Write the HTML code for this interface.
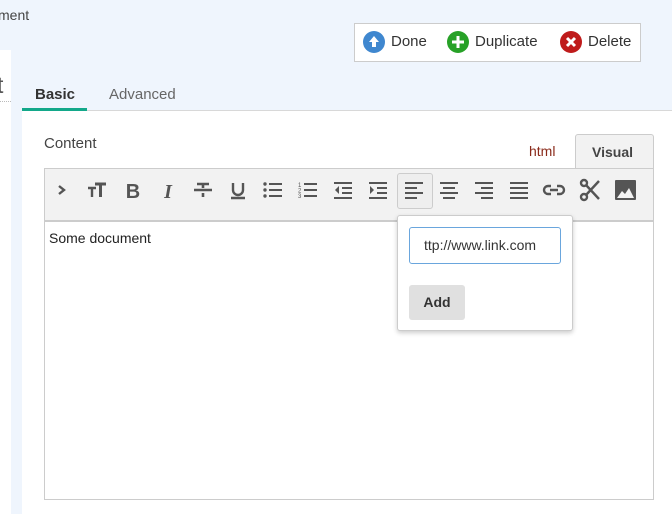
<!DOCTYPE html>
<html><head><style>
*{box-sizing:border-box;margin:0;padding:0}
body{width:672px;height:514px;overflow:hidden;background:#eff5fd;font-family:"Liberation Sans",sans-serif;position:relative;color:#333}
.a{position:absolute}
</style></head><body>
<div class="a" style="left:-2px;top:7px;font-size:14px;color:#444">ment</div>
<div class="a" style="left:0;top:50px;width:11px;height:464px;background:#fff"></div>
<div class="a" style="left:-3px;top:72px;font-size:23px;color:#555">t</div>
<div class="a" style="left:0;top:101px;width:11px;border-top:1px dotted #bbb"></div>

<div class="a" style="left:354px;top:23px;width:287px;height:39px;background:#fff;border:1px solid #ccc"></div>
<svg class="a" style="left:363px;top:31px" width="22" height="22"><circle cx="11" cy="11" r="11" fill="#3f87cf"/><path d="M11 5l5 6h-3v5h-4v-5h-3z" fill="#fff"/></svg>
<div class="a" style="left:391px;top:33px;font-size:15px">Done</div>
<svg class="a" style="left:447px;top:31px" width="22" height="22"><circle cx="11" cy="11" r="11" fill="#27a127"/><path d="M11 5v12M5 11h12" stroke="#fff" stroke-width="3"/></svg>
<div class="a" style="left:475px;top:33px;font-size:15px">Duplicate</div>
<svg class="a" style="left:560px;top:31px" width="22" height="22"><circle cx="11" cy="11" r="11" fill="#bf1b1b"/><path d="M7 7l8 8M15 7l-8 8" stroke="#fff" stroke-width="3"/></svg>
<div class="a" style="left:588px;top:33px;font-size:15px">Delete</div>

<div class="a" style="left:35px;top:86px;font-size:15px;font-weight:bold;color:#333">Basic</div>
<div class="a" style="left:109px;top:86px;font-size:15px;color:#666">Advanced</div>
<div class="a" style="left:22px;top:110px;width:650px;height:404px;background:#fff;border-top:1px solid #d8d8d8"></div>
<div class="a" style="left:22px;top:108px;width:65px;height:3px;background:#13a88a"></div>

<div class="a" style="left:44px;top:135px;font-size:15px;color:#444">Content</div>
<div class="a" style="left:529px;top:143px;font-size:14px;color:#8a2a1a">html</div>
<div class="a" style="left:575px;top:134px;width:79px;height:36px;background:#f2f2f2;border:1px solid #ccc;border-bottom:none;border-radius:3px 3px 0 0"></div>
<div class="a" style="left:592px;top:144px;font-size:14px;font-weight:bold;color:#444">Visual</div>

<div class="a" style="left:44px;top:168px;width:610px;height:332px;border:1px solid #ccc;background:#fff"></div>
<div class="a" style="left:45px;top:169px;width:608px;height:53px;background:#f2f2f2;border-bottom:2px solid #ccc"></div>
<div class="a" style="left:397px;top:173px;width:36px;height:36px;border:1px solid #ccc;border-radius:3px;background:#eee"></div>

<svg class="a" style="left:0;top:0" width="672" height="230" fill="#555" stroke="#555">
<g fill="none" stroke-width="2.4">
<g transform="translate(52,180)"><path d="M7 6l5 4-5 4"/></g>
<g transform="translate(87,180)"><path d="M1 8h8M5 8v9"/><path d="M8 4h11M13.5 4v13" stroke-width="3"/></g>
<g transform="translate(193,180)" stroke-width="2.6"><path d="M4 4h12M10 4v4M1 10h18M10 13v4"/></g>
<g transform="translate(228,180)"><path d="M5 3v7a5 5 0 0010 0v-7M3 18h14"/></g>
<g transform="translate(544,180)"><path d="M7 6h-3a4 4 0 000 8h3M13 6h3a4 4 0 010 8h-3M6 10h8"/></g>
<g transform="translate(580,180)"><circle cx="4" cy="17" r="3"/><circle cx="4" cy="3" r="3"/><path d="M6 15l13-14M6 5l13 14"/></g>
</g>
<text x="133" y="198" text-anchor="middle" font-size="20" font-weight="bold" font-family="Liberation Sans" stroke="none">B</text>
<text x="168" y="198" text-anchor="middle" font-size="20" font-weight="bold" font-style="italic" font-family="Liberation Serif" stroke="none">I</text>
<g stroke="none">
<g transform="translate(263,180)"><circle cx="2" cy="4" r="1.7"/><circle cx="2" cy="10" r="1.7"/><circle cx="2" cy="16" r="1.7"/><rect x="6" y="3" width="13" height="2"/><rect x="6" y="9" width="13" height="2"/><rect x="6" y="15" width="13" height="2"/></g>
<g transform="translate(298,180)"><text x="0" y="7" font-size="6" font-family="Liberation Sans">1</text><text x="0" y="12.5" font-size="6" font-family="Liberation Sans">2</text><text x="0" y="18" font-size="6" font-family="Liberation Sans">3</text><rect x="6" y="3" width="13" height="2"/><rect x="6" y="9" width="13" height="2"/><rect x="6" y="15" width="13" height="2"/></g>
<g transform="translate(333,180)"><rect x="1" y="2" width="18" height="2"/><rect x="9" y="7" width="10" height="2"/><rect x="9" y="12" width="10" height="2"/><rect x="1" y="17" width="18" height="2"/><path d="M6 6v8l-4-4z"/></g>
<g transform="translate(368,180)"><rect x="1" y="2" width="18" height="2"/><rect x="9" y="7" width="10" height="2"/><rect x="9" y="12" width="10" height="2"/><rect x="1" y="17" width="18" height="2"/><path d="M2 6v8l4-4z"/></g>
<g transform="translate(404,180)"><rect x="1" y="2" width="18" height="2"/><rect x="1" y="7" width="12" height="2"/><rect x="1" y="12" width="18" height="2"/><rect x="1" y="17" width="12" height="2"/></g>
<g transform="translate(439,180)"><rect x="1" y="2" width="18" height="2"/><rect x="4" y="7" width="12" height="2"/><rect x="1" y="12" width="18" height="2"/><rect x="4" y="17" width="12" height="2"/></g>
<g transform="translate(474,180)"><rect x="1" y="2" width="18" height="2"/><rect x="7" y="7" width="12" height="2"/><rect x="1" y="12" width="18" height="2"/><rect x="7" y="17" width="12" height="2"/></g>
<g transform="translate(509,180)"><rect x="1" y="2" width="18" height="2"/><rect x="1" y="7" width="18" height="2"/><rect x="1" y="12" width="18" height="2"/><rect x="1" y="17" width="18" height="2"/></g>
<g transform="translate(615,180)"><rect x="0" y="0" width="21" height="20" rx="1"/><path d="M2 18l5-7 3 3 4-6 5 10z" fill="#f2f2f2"/></g>
</g>
</svg>

<div class="a" style="left:49px;top:230px;font-size:14px;color:#222">Some document</div>

<div class="a" style="left:397px;top:215px;width:176px;height:116px;background:#fff;border:1px solid #ccc;border-radius:3px;box-shadow:0 2px 5px rgba(0,0,0,.2)"></div>
<div class="a" style="left:409px;top:227px;width:152px;height:37px;border:1px solid #6aa6dd;border-radius:3px;background:#fff"></div>
<div class="a" style="left:424px;top:237px;font-size:14px;color:#333">ttp://www.link.com</div>
<div class="a" style="left:409px;top:285px;width:56px;height:35px;background:#e0e0e0;border-radius:3px;font-size:14px;font-weight:bold;text-align:center;line-height:35px;color:#333">Add</div>
</body></html>
